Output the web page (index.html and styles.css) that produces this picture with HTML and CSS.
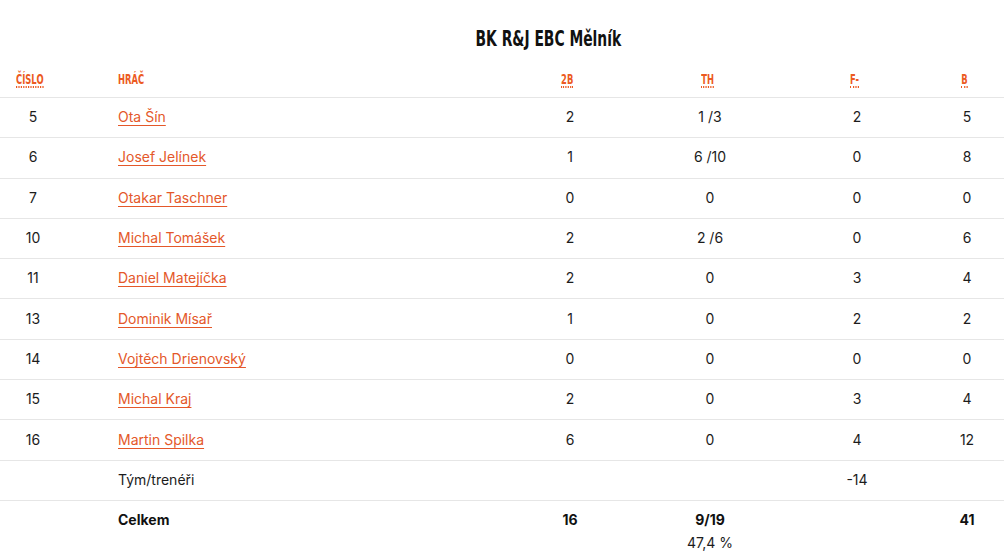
FILE: index.html
```html
<!DOCTYPE html>
<html lang="cs">
<head>
<meta charset="utf-8">
<title>BK R&amp;J EBC Mělník</title>
<link rel="stylesheet" href="styles.css">
</head>
<body>
<div class="box">
  <h2 class="team-title"><span class="squash">BK R&amp;J EBC Mělník</span></h2>
  <table class="stats">
    <colgroup>
      <col class="c-num"><col class="c-name"><col class="c-2b"><col class="c-th"><col class="c-f"><col class="c-b">
    </colgroup>
    <thead>
      <tr>
        <th class="num-h"><abbr title="Číslo">ČÍSLO</abbr></th>
        <th class="name"><span class="hd">HRÁČ</span></th>
        <th><abbr title="Dvojky">2B</abbr></th>
        <th><abbr title="Trestné hody">TH</abbr></th>
        <th><abbr title="Fauly">F-</abbr></th>
        <th><abbr title="Body">B</abbr></th>
      </tr>
    </thead>
    <tbody>
      <tr><td class="num">5</td><td class="name"><a href="#">Ota Šín</a></td><td>2</td><td>1 /3</td><td>2</td><td>5</td></tr>
      <tr><td class="num">6</td><td class="name"><a href="#">Josef Jelínek</a></td><td>1</td><td>6 /10</td><td>0</td><td>8</td></tr>
      <tr><td class="num">7</td><td class="name"><a href="#">Otakar Taschner</a></td><td>0</td><td>0</td><td>0</td><td>0</td></tr>
      <tr><td class="num">10</td><td class="name"><a href="#">Michal Tomášek</a></td><td>2</td><td>2 /6</td><td>0</td><td>6</td></tr>
      <tr><td class="num">11</td><td class="name"><a href="#">Daniel Matejíčka</a></td><td>2</td><td>0</td><td>3</td><td>4</td></tr>
      <tr><td class="num">13</td><td class="name"><a href="#">Dominik Mísař</a></td><td>1</td><td>0</td><td>2</td><td>2</td></tr>
      <tr><td class="num">14</td><td class="name"><a href="#">Vojtěch Drienovský</a></td><td>0</td><td>0</td><td>0</td><td>0</td></tr>
      <tr><td class="num">15</td><td class="name"><a href="#">Michal Kraj</a></td><td>2</td><td>0</td><td>3</td><td>4</td></tr>
      <tr><td class="num">16</td><td class="name"><a href="#">Martin Spilka</a></td><td>6</td><td>0</td><td>4</td><td>12</td></tr>
      <tr><td class="num"></td><td class="name">Tým/trenéři</td><td></td><td></td><td>-14</td><td></td></tr>
    </tbody>
    <tfoot>
      <tr class="total">
        <td class="num"></td><td class="name"><strong>Celkem</strong></td><td><strong>16</strong></td>
        <td><strong>9/19</strong><span class="pct">47,4 %</span></td><td></td><td><strong>41</strong></td>
      </tr>
    </tfoot>
  </table>
</div>
</body>
</html>
```

FILE: styles.css
```css
html, body {
  margin: 0;
  padding: 0;
  background: #fff;
}
body {
  font-family: Inter, "Noto Sans", sans-serif;
  font-size: 14px;
  color: #1c1c1c;
}
.box {
  width: 1004px;
}
.team-title {
  margin: 0;
  padding: 25px 0 0 92px;
  height: 35px;
  text-align: center;
  font-family: "DejaVu Sans", sans-serif;
  font-weight: 700;
  font-size: 21px;
  letter-spacing: 0;
  line-height: 28px;
  color: #111;
}
.squash {
  display: inline-block;
  transform: scaleX(0.66);
  transform-origin: center;
}
.stats {
  width: 1004px;
  border-collapse: collapse;
  table-layout: fixed;
}
.c-num { width: 66px; }
.c-name { width: 438px; }
.c-2b { width: 132px; }
.c-th { width: 148px; }
.c-f { width: 146px; }
.c-b { width: 74px; }

.stats th {
  height: 37px;
  padding: 0 5px 0 0;
  text-align: center;
  vertical-align: middle;
  border-bottom: 1px solid #e6e6e6;
}
.stats th abbr,
.stats th .hd {
  font-family: "DejaVu Sans", sans-serif;
  font-weight: 700;
  font-size: 14px;
  letter-spacing: 0;
  color: #ec5a22;
  text-decoration: none;
  display: inline-block;
  line-height: 14px;
  transform: scaleX(0.6);
  transform-origin: center;
}
.stats th abbr {
  border-bottom: 2px dotted #ec5a22;
}
.stats th.num-h {
  text-align: left;
  padding-left: 16px;
}
.stats th.name {
  text-align: left;
  padding-left: 52px;
}
.stats th.num-h abbr,
.stats th.name .hd {
  transform-origin: left center;
}
.stats td {
  height: 37.3px;
  padding: 0 0 2px;
  text-align: center;
  vertical-align: middle;
  border-bottom: 1px solid #e6e6e6;
}
.stats td.name {
  text-align: left;
  padding-left: 52px;
}
.stats td a {
  color: #e4582a;
  text-decoration: underline;
  text-underline-offset: 3px;
}
.stats tfoot td {
  border-bottom: none;
  vertical-align: top;
  padding-top: 10px;
}
.stats strong {
  font-weight: 700;
  color: #111;
}
.pct {
  display: block;
  margin-top: 6px;
}
```
